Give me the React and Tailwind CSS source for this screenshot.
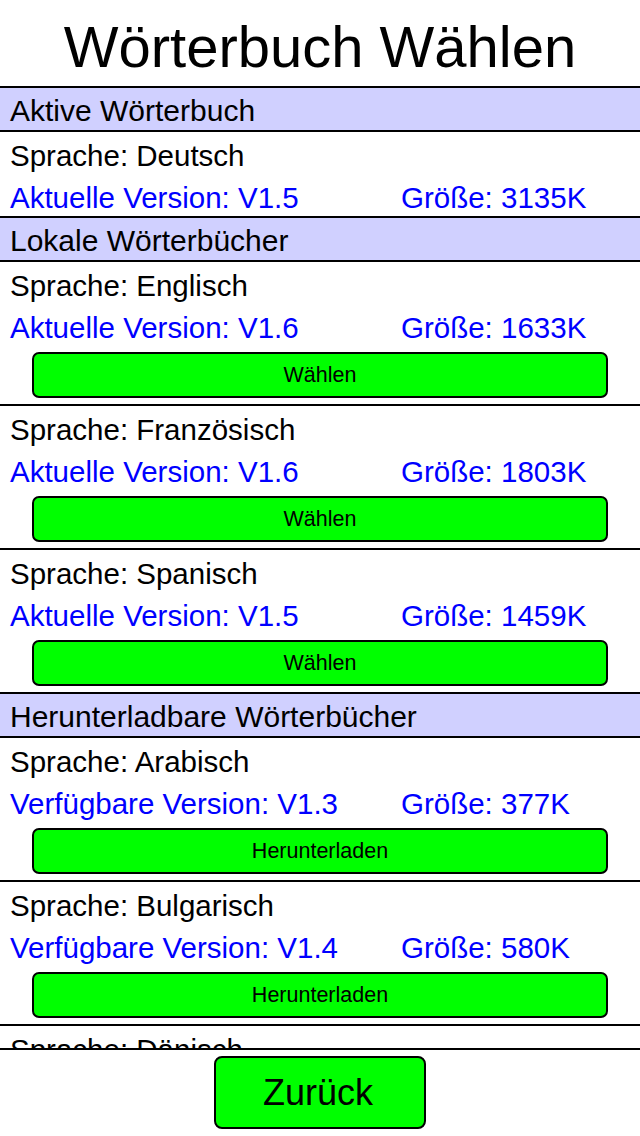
const activeDict = { lang: "Deutsch", version: "V1.5", size: "3135K" };

const localDicts = [
  { lang: "Englisch", version: "V1.6", size: "1633K" },
  { lang: "Französisch", version: "V1.6", size: "1803K" },
  { lang: "Spanisch", version: "V1.5", size: "1459K" },
];

const remoteDicts = [
  { lang: "Arabisch", version: "V1.3", size: "377K" },
  { lang: "Bulgarisch", version: "V1.4", size: "580K" },
  { lang: "Dänisch", version: "V1.2", size: "412K" },
];

const SectionHeader = ({ title }) => (
  <div className="h-[44px] shrink-0 flex items-center pl-[10px] pt-[2px] bg-[#d0d0ff] border-b-2 border-black text-[30px] text-black">
    {title}
  </div>
);

const DictInfo = ({ lang, label, version, size }) => (
  <div className="pt-[3px] leading-[42px] text-[29.5px] pl-[10px]">
    <div className="text-black whitespace-nowrap">Sprache: {lang}</div>
    <div className="flex text-[#0000ff] whitespace-nowrap">
      <span className="w-[391px] shrink-0">
        {label}: {version}
      </span>
      <span>Größe: {size}</span>
    </div>
  </div>
);

const DictRow = ({ dict, label, action }) => (
  <div className="shrink-0 border-b-2 border-black">
    <div className={action ? "h-[142px]" : "h-[84px]"}>
      <DictInfo lang={dict.lang} label={label} version={dict.version} size={dict.size} />
      {action && (
        <div className="px-8 mt-[3px]">
          <button className="w-full h-[46px] bg-[#00ff00] border-2 border-black rounded-[7px] text-[21.5px] text-black flex items-center justify-center">
            {action}
          </button>
        </div>
      )}
    </div>
  </div>
);

export default function App() {
  return (
    <div className="w-[640px] h-[1136px] bg-white flex flex-col overflow-hidden font-['Liberation_Sans',Arial,sans-serif]">
      {/* Title */}
      <div className="h-[86px] shrink-0 flex items-center justify-center pt-[7px] text-[58px] text-black">
        Wörterbuch Wählen
      </div>

      {/* Scrollable dictionary list */}
      <div className="h-[962px] shrink-0 border-t-2 border-black overflow-hidden flex flex-col">
        <SectionHeader title="Aktive Wörterbuch" />
        <DictRow dict={activeDict} label="Aktuelle Version" />

        <SectionHeader title="Lokale Wörterbücher" />
        {localDicts.map((d) => (
          <DictRow key={d.lang} dict={d} label="Aktuelle Version" action="Wählen" />
        ))}

        <SectionHeader title="Herunterladbare Wörterbücher" />
        {remoteDicts.map((d) => (
          <DictRow key={d.lang} dict={d} label="Verfügbare Version" action="Herunterladen" />
        ))}
      </div>

      {/* Bottom bar */}
      <div className="flex-1 border-t-2 border-black flex justify-center pt-[6px]">
        <button className="w-[212px] h-[73px] bg-[#00ff00] border-2 border-black rounded-[8px] text-[36px] text-black flex items-center justify-center pr-[4px]">
          Zurück
        </button>
      </div>
    </div>
  );
}
